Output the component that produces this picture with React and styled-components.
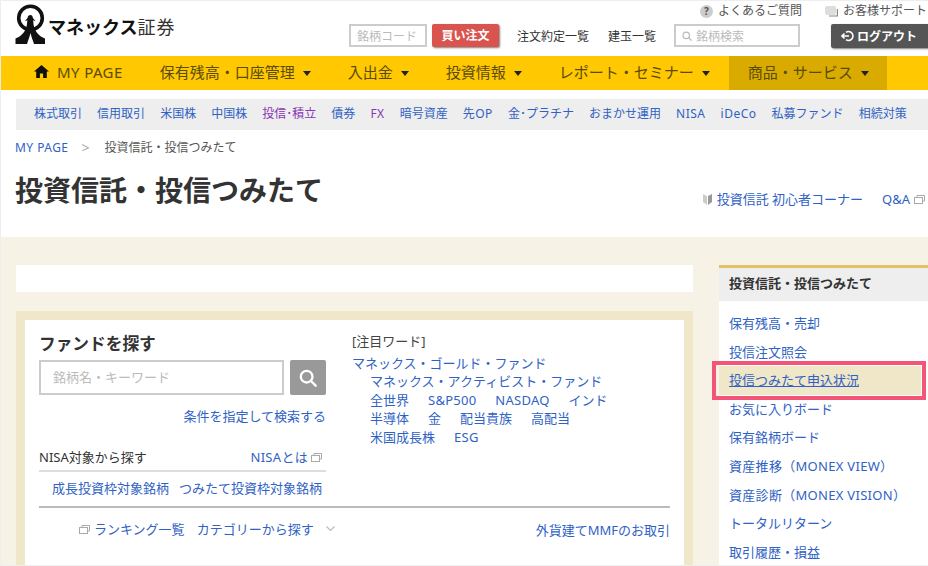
import React from 'react'
import styled, { createGlobalStyle } from 'styled-components'

const GlobalStyle = createGlobalStyle`
  html, body {
    margin: 0;
    padding: 0;
    background: #fff;
  }
  body {
    font-family: "Noto Sans", "Noto Sans CJK JP", sans-serif;
    font-size: 13px;
    color: #333;
  }
`

const LINK = '#2f62c4'

const Page = styled.div`
  width: 928px;
  height: 566px;
  box-sizing: border-box;
  overflow: hidden;
  border-top: 1px solid #eee;
  border-left: 1px solid #eee;
  border-bottom: 1px solid #eee;
  display: flex;
  flex-direction: column;
`

const Header = styled.header`
  height: 55px;
  flex: none;
  display: flex;
  padding-left: 14px;
`

const Logo = styled.div`
  width: 334px;
  flex: none;
  display: flex;
  align-items: flex-start;
  padding-top: 3px;
  gap: 2px;
`

const LogoText = styled.div`
  margin-top: 10px;
  font-size: 18px;
  line-height: 26px;
  font-weight: 700;
  color: #111;
  white-space: nowrap;
  span {
    font-weight: 400;
    color: #333;
    letter-spacing: 1px;
  }
`

const HeaderRight = styled.div`
  flex: none;
  width: 600px;
`

const HelpRow = styled.div`
  height: 22px;
  padding-left: 351px;
  display: flex;
  align-items: center;
  font-size: 12px;
  line-height: 16px;
  color: #555;
  white-space: nowrap;
  margin-top: -1px;
`

const HelpItem = styled.span`
  display: inline-flex;
  align-items: center;
  gap: 5px;
  margin-right: 23px;
`

const QMark = styled.span`
  width: 13px;
  height: 13px;
  border-radius: 50%;
  background: #ccc;
  color: #555;
  font-size: 10px;
  font-weight: 700;
  line-height: 13px;
  text-align: center;
`

const ToolRow = styled.div`
  display: flex;
  align-items: flex-start;
  margin-top: 2px;
`

const SmallInput = styled.div`
  box-sizing: border-box;
  width: ${({ $w }) => $w}px;
  height: 23px;
  margin-left: ${({ $ml }) => $ml || 0}px;
  border: 2px solid #ccc;
  color: #bbb;
  font-size: 12px;
  padding-left: 6px;
  display: flex;
  align-items: center;
  gap: 4px;
  white-space: nowrap;
`

const BuyButton = styled.div`
  margin-left: 5px;
  width: 67px;
  height: 23px;
  background: #d9534f;
  color: #fff;
  font-size: 12px;
  font-weight: 700;
  line-height: 23px;
  text-align: center;
  border-radius: 2px;
  box-shadow: 1px 1px 2px rgba(0, 0, 0, 0.5);
`

const ToolLink = styled.a`
  margin-left: ${({ $ml }) => $ml}px;
  font-size: 12px;
  line-height: 25px;
  color: #333;
  white-space: nowrap;
`

const LogoutButton = styled.div`
  margin-left: 31px;
  flex: none;
  width: 100px;
  height: 24px;
  background: #555;
  color: #fff;
  font-size: 12px;
  font-weight: 700;
  padding-left: 10px;
  box-sizing: border-box;
  display: flex;
  align-items: center;
  gap: 3px;
  border-radius: 2px;
  box-shadow: 1px 1px 2px rgba(0, 0, 0, 0.5);
`

const Nav = styled.nav`
  height: 34px;
  flex: none;
  background: #ffc800;
  display: flex;
  padding-left: 14px;
`

const NavItem = styled.a`
  display: flex;
  align-items: center;
  box-sizing: border-box;
  padding: 0 18px 3px 19px;
  margin-left: ${({ $active }) => ($active ? '1px' : '0')};
  font-size: 15px;
  letter-spacing: ${({ $latin }) => ($latin ? '0.4px' : '0')};
  color: #5a4c08;
  white-space: nowrap;
  background: ${({ $active }) => ($active ? '#d9ab00' : 'transparent')};
`

const Caret = styled.i`
  margin: 3px 0 0 8px;
  width: 0;
  height: 0;
  border-left: 4px solid transparent;
  border-right: 4px solid transparent;
  border-top: 5px solid #222;
`

const HomeSvg = styled.svg`
  margin-right: 8px;
`

const SubNav = styled.div`
  margin: 9px 0 0 15px;
  height: 31px;
  flex: none;
  box-sizing: border-box;
  background: #eee;
  padding: 0 0 3px 18px;
  display: flex;
  align-items: center;
  gap: 15.05px;
  font-size: 12px;
  white-space: nowrap;
`

const SubLink = styled.a`
  color: ${({ $purple }) => ($purple ? '#8a35b8' : LINK)};
  letter-spacing: ${({ $latin }) => ($latin ? '0.5px' : '0')};
`

const Crumbs = styled.div`
  padding: 5px 0 0 14px;
  height: 24px;
  flex: none;
  display: flex;
  align-items: center;
  font-size: 12px;
  white-space: nowrap;
  color: #555;
  a {
    color: ${LINK};
    letter-spacing: 0.45px;
  }
`

const CrumbSep = styled.span`
  color: #aaa;
  font-size: 14px;
  margin: 0 15px 0 13px;
`

const TitleRow = styled.div`
  height: 78px;
  flex: none;
  padding: 0 3px 0 14px;
  display: flex;
  align-items: flex-start;
  justify-content: space-between;
`

const Title = styled.h1`
  margin: 11px 0 0;
  font-size: 28px;
  line-height: 40px;
  font-weight: 700;
  color: #333;
`

const TitleLinks = styled.div`
  margin-top: 31px;
  display: flex;
  align-items: center;
  font-size: 13px;
  line-height: 18px;
  color: ${LINK};
  white-space: nowrap;
`

const BeginnerSvg = styled.svg`
  margin-right: 5px;
`

const QaLink = styled.a`
  margin: 0 4px 0 19px;
`

const Main = styled.main`
  flex: 1;
  min-height: 0;
  background: #f6f2e6;
  padding: 28px 0 0 15px;
  display: flex;
  align-items: flex-start;
  gap: 26px;
`

const LeftColumn = styled.div`
  width: 677px;
  flex: none;
  display: flex;
  flex-direction: column;
  gap: 19px;
`

const Notice = styled.div`
  height: 27px;
  background: #fff;
`

const FundPanel = styled.section`
  border: 9px solid #f0e6c8;
  border-bottom: 0;
  background: #fff;
  padding: 12px 14px 40px;
  height: 255px;
  box-sizing: border-box;
`

const PanelTop = styled.div`
  display: grid;
  grid-template-columns: 287px 1fr;
  column-gap: 26px;
  height: 174px;
`

const PanelHeading = styled.h2`
  margin: 0;
  font-size: 16.7px;
  line-height: 24px;
  font-weight: 700;
  color: #333;
`

const SearchRow = styled.div`
  margin-top: 4px;
  display: flex;
  gap: 6px;
`

const SearchBox = styled.div`
  flex: 1;
  height: 35px;
  box-sizing: border-box;
  border: 2px solid #ccc;
  color: #bbb;
  padding-left: 12px;
  line-height: 30px;
  font-size: 13px;
`

const SearchButton = styled.div`
  width: 36px;
  height: 35px;
  background: #999;
  border-radius: 2px;
  display: flex;
  align-items: center;
  justify-content: center;
`

const AdvancedLink = styled.a`
  display: block;
  margin-top: 11px;
  text-align: right;
  color: ${LINK};
  line-height: 20px;
`

const NisaHead = styled.div`
  margin-top: 22px;
  height: 24px;
  box-sizing: border-box;
  border-bottom: 2px solid #ddd;
  display: flex;
  justify-content: space-between;
  align-items: flex-start;
  line-height: 18px;
  padding-right: 4px;
  a {
    color: ${LINK};
    display: inline-flex;
    align-items: center;
    gap: 3px;
    letter-spacing: 0.3px;
  }
`

const NisaLinks = styled.div`
  margin-top: 7px;
  display: flex;
  justify-content: flex-end;
  gap: 10px;
  padding-right: 4px;
  line-height: 18px;
  color: ${LINK};
`

const Words = styled.div`
  line-height: 18.5px;
`

const WordsLabel = styled.div`
  color: #444;
  margin-bottom: 3px;
`

const WordRow = styled.div`
  display: flex;
  gap: 19px;
  color: ${LINK};
  padding-left: ${({ $indent }) => ($indent ? '18px' : '0')};
  white-space: nowrap;
`

const Word = styled.a`
  letter-spacing: ${({ $latin }) => ($latin ? '0.25px' : '0')};
`

const PanelFooter = styled.div`
  border-top: 2px solid #bbb;
  padding-top: 10px;
  display: flex;
  justify-content: space-between;
  color: ${LINK};
  line-height: 20px;
`

const FooterLeft = styled.div`
  margin-left: 40px;
  display: flex;
  align-items: center;
  gap: 4px;
`

const CategoryLink = styled.a`
  margin-left: 8px;
`

const FooterRight = styled.a`
  margin-top: 2px;
`

const ChevronSvg = styled.svg`
  margin-left: 8px;
`

const Sidebar = styled.aside`
  flex: 1;
  min-width: 0;
  height: 300px;
  background: #fff;
  border-top: 3px solid #e3c25f;
`

const SideHead = styled.div`
  height: 33px;
  background: #eee;
  padding-left: 10px;
  font-size: 13px;
  font-weight: 700;
  line-height: 30px;
  color: #333;
`

const SideList = styled.div`
  padding-top: 8px;
`

const SideItem = styled.a`
  position: relative;
  display: block;
  height: 28.6px;
  line-height: 28px;
  padding-left: 10px;
  margin-right: 7px;
  font-size: 13px;
  letter-spacing: ${({ $wide }) => ($wide ? '0.3px' : '0')};
  color: ${LINK};
  white-space: nowrap;
  background: ${({ $current }) => ($current ? '#f0e6c8' : 'transparent')};
  text-decoration: ${({ $current }) => ($current ? 'underline' : 'none')};

  ${({ $current }) =>
    $current &&
    `
    &::after {
      content: '';
      position: absolute;
      inset: -5px -5px -5px -7px;
      border: 4px solid #f25578;
    }
  `}
`

const HomeIcon = () => (
  <HomeSvg width="15" height="13" viewBox="0 0 15 13">
    <path d="M7.5 0 0 6.6h2.2V13h3.7V8.6h3.2V13h3.7V6.6H15z" fill="#111" />
  </HomeSvg>
)

const WindowIcon = () => (
  <svg width="11" height="9" viewBox="0 0 11 9" fill="none" stroke="#aaa">
    <path d="M3 2.5V.5h7.5v5.5H8.5" />
    <rect x="0.5" y="2.5" width="8" height="6" />
  </svg>
)

const SearchIcon = ({ size, color, width }) => (
  <svg width={size} height={size} viewBox="0 0 20 20" fill="none" stroke={color} strokeWidth={width}>
    <circle cx="8.5" cy="8.5" r="6.5" />
    <path d="m13.5 13.5 5 5" strokeLinecap="round" />
  </svg>
)

const LogoMark = () => (
  <svg width="31" height="41" viewBox="0 0 31 41">
    <circle cx="15.5" cy="14" r="11.8" fill="none" stroke="#111" strokeWidth="3.6" />
    <path
      d="M15.5 11c1.3 0 2.200 1 2.200 2.300 0 1.200 1.800 2 2.800 3.900l-2.300-.9c.1 3 .5 6.500 1.800 9.200 1.600 3.400 5.500 7.500 10 9V40H19l-1-3c-.8-2-1.700-5-2.500-8-.8 3-1.700 6-2.500 8l-1 3H.5v-5.500c4.500-1.500 8.400-5.600 10-9 1.300-2.700 1.700-6.200 1.800-9.200l-2.300.9c1-1.900 2.800-2.700 2.800-3.900 0-1.300.9-2.300 2.700-2.300z"
      fill="#111"
    />
  </svg>
)

const LogoutIcon = () => (
  <svg width="13" height="12" viewBox="0 0 13 12" fill="none" stroke="#fff" strokeWidth="1.6">
    <path d="M5 2.300A4.500 4.500 0 0 1 12 6a4.500 4.500 0 0 1-7 3.700" />
    <path d="M8 6H1M3.500 3.500 1 6l2.500 2.500" />
  </svg>
)

const BeginnerIcon = () => (
  <BeginnerSvg width="9" height="11" viewBox="0 0 9 11">
    <path d="M0 0l4 2v9L0 8z" fill="#ccc" />
    <path d="M9 0 5 2v9l4-3z" fill="#999" />
  </BeginnerSvg>
)

const CommentIcon = () => (
  <svg width="13" height="11" viewBox="0 0 13 11">
    <rect x="0" y="0" width="11" height="9" rx="2" fill="#ddd" />
    <path d="M12.4 3v7H4" fill="none" stroke="#888" strokeWidth="1.200" />
  </svg>
)

const ChevronIcon = () => (
  <ChevronSvg width="9" height="6" viewBox="0 0 9 6" fill="none" stroke="#bbb" strokeWidth="1.200">
    <path d="m.5.5 4 4 4-4" />
  </ChevronSvg>
)

const navItems = [
  { label: '保有残高・口座管理' },
  { label: '入出金' },
  { label: '投資情報' },
  { label: 'レポート・セミナー' },
  { label: '商品・サービス', active: true }
]

const subItems = [
  { label: '株式取引' },
  { label: '信用取引' },
  { label: '米国株' },
  { label: '中国株' },
  { label: '投信･積立', purple: true },
  { label: '債券' },
  { label: 'FX', purple: true, latin: true },
  { label: '暗号資産' },
  { label: '先OP', latin: true },
  { label: '金･プラチナ' },
  { label: 'おまかせ運用' },
  { label: 'NISA', latin: true },
  { label: 'iDeCo', latin: true },
  { label: '私募ファンド' },
  { label: '相続対策' }
]

const wordRows = [
  ['マネックス・アクティビスト・ファンド'],
  ['全世界', 'S&P500', 'NASDAQ', 'インド'],
  ['半導体', '金', '配当貴族', '高配当'],
  ['米国成長株', 'ESG']
]

const sideItems = [
  { label: '保有残高・売却' },
  { label: '投信注文照会' },
  { label: '投信つみたて申込状況', current: true },
  { label: 'お気に入りボード' },
  { label: '保有銘柄ボード' },
  { label: '資産推移（MONEX VIEW）', wide: true },
  { label: '資産診断（MONEX VISION）', wide: true },
  { label: 'トータルリターン' },
  { label: '取引履歴・損益' }
]

export default function App() {
  return (
    <Page>
      <GlobalStyle />
      <Header>
        <Logo>
          <LogoMark />
          <LogoText>
            マネックス<span>証券</span>
          </LogoText>
        </Logo>
        <HeaderRight>
          <HelpRow>
            <HelpItem>
              <QMark>?</QMark> よくあるご質問
            </HelpItem>
            <HelpItem>
              <CommentIcon /> お客様サポート
            </HelpItem>
          </HelpRow>
          <ToolRow>
            <SmallInput $w={78}>銘柄コード</SmallInput>
            <BuyButton>買い注文</BuyButton>
            <ToolLink $ml={18}>注文約定一覧</ToolLink>
            <ToolLink $ml={19}>建玉一覧</ToolLink>
            <SmallInput $w={126} $ml={18}>
              <SearchIcon size={10} color="#bbb" width={2.5} />
              銘柄検索
            </SmallInput>
            <LogoutButton>
              <LogoutIcon />
              ログアウト
            </LogoutButton>
          </ToolRow>
        </HeaderRight>
      </Header>

      <Nav>
        <NavItem $latin>
          <HomeIcon />
          MY PAGE
        </NavItem>
        {navItems.map(e => (
          <NavItem key={e.label} $active={e.active}>
            {e.label}
            <Caret />
          </NavItem>
        ))}
      </Nav>

      <SubNav>
        {subItems.map(e => (
          <SubLink key={e.label} $purple={e.purple} $latin={e.latin}>
            {e.label}
          </SubLink>
        ))}
      </SubNav>

      <Crumbs>
        <a>MY PAGE</a>
        <CrumbSep>&gt;</CrumbSep>
        投資信託・投信つみたて
      </Crumbs>

      <TitleRow>
        <Title>投資信託・投信つみたて</Title>
        <TitleLinks>
          <BeginnerIcon />
          投資信託 初心者コーナー
          <QaLink>Q&amp;A</QaLink>
          <WindowIcon />
        </TitleLinks>
      </TitleRow>

      <Main>
        <LeftColumn>
          <Notice />
          <FundPanel>
            <PanelTop>
              <div>
                <PanelHeading>ファンドを探す</PanelHeading>
                <SearchRow>
                  <SearchBox>銘柄名・キーワード</SearchBox>
                  <SearchButton>
                    <SearchIcon size={18} color="#fff" width={2.6} />
                  </SearchButton>
                </SearchRow>
                <AdvancedLink>条件を指定して検索する</AdvancedLink>
                <NisaHead>
                  <span>NISA対象から探す</span>
                  <a>
                    NISAとは <WindowIcon />
                  </a>
                </NisaHead>
                <NisaLinks>
                  <a>成長投資枠対象銘柄</a>
                  <a>つみたて投資枠対象銘柄</a>
                </NisaLinks>
              </div>
              <Words>
                <WordsLabel>[注目ワード]</WordsLabel>
                <WordRow>マネックス・ゴールド・ファンド</WordRow>
                {wordRows.map((row, i) => (
                  <WordRow key={i} $indent>
                    {row.map(w => (
                      <Word key={w} $latin={/^[A-Z]/.test(w)}>
                        {w}
                      </Word>
                    ))}
                  </WordRow>
                ))}
              </Words>
            </PanelTop>
            <PanelFooter>
              <FooterLeft>
                <WindowIcon />
                <a>ランキング一覧</a>
                <CategoryLink>カテゴリーから探す</CategoryLink>
                <ChevronIcon />
              </FooterLeft>
              <FooterRight>外貨建てMMFのお取引</FooterRight>
            </PanelFooter>
          </FundPanel>
        </LeftColumn>

        <Sidebar>
          <SideHead>投資信託・投信つみたて</SideHead>
          <SideList>
            {sideItems.map(e => (
              <SideItem key={e.label} $current={e.current} $wide={e.wide}>
                {e.label}
              </SideItem>
            ))}
          </SideList>
        </Sidebar>
      </Main>
    </Page>
  )
}
